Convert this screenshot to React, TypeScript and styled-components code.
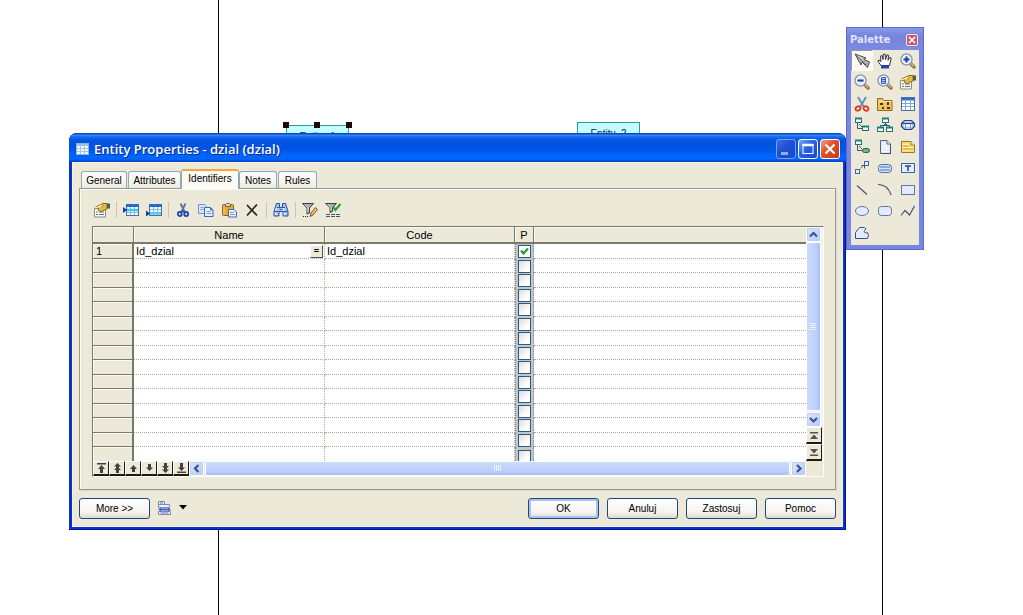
import React from "react";
import styled, { createGlobalStyle, css } from "styled-components";

const face = "#ece9d8";
const line = "#7b796c";
const uiFont = `"Liberation Sans", Arial, sans-serif`;

const GlobalStyle = createGlobalStyle`
  *, *::before, *::after { box-sizing: border-box; }
  body { margin: 0; background: #fff; color: #000; font: 10px/14px ${uiFont}; }
  button { font: inherit; color: inherit; margin: 0; padding: 0; border: 0; background: none; }
  svg { display: block; }
`;

/* ---------- diagram canvas ---------- */

const Canvas = styled.main`
  position: relative;
  min-height: 100vh;
  overflow: hidden;
`;

const PageLine = styled.div<{ $x: number }>`
  position: absolute;
  top: 0;
  bottom: 0;
  left: ${(p) => p.$x}px;
  width: 1px;
  background: #000;
`;

const Entity = styled.div<{ $x: number; $y: number }>`
  position: absolute;
  left: ${(p) => p.$x}px;
  top: ${(p) => p.$y}px;
  width: 63px;
  height: 40px;
  padding-top: 5px;
  border: 1px solid #2a9c9c;
  background: #c4fdff;
  text-align: center;
  font: 10px/12px ${uiFont};
  color: #102050;
`;

const Handle = styled.span<{ $x: number }>`
  position: absolute;
  top: -4px;
  left: ${(p) => p.$x}px;
  width: 6px;
  height: 6px;
  background: #1a0808;
`;

/* ---------- dialog window ---------- */

const Dialog = styled.section`
  position: absolute;
  left: 69px;
  right: 177px;
  top: 133px;
  padding: 0 3px 3px;
  border-radius: 8px 8px 0 0;
  background: #0a34cc;
  box-shadow: inset -1px -1px 0 #00138c, inset 1px 0 0 #0a2fb4;
`;

const TitleBar = styled.header`
  display: flex;
  align-items: center;
  gap: 5px;
  height: 29px;
  margin: 0 -3px;
  padding: 3px 6px 0 7px;
  border-radius: 8px 8px 0 0;
  background: linear-gradient(#0a48c4 0, #0a48c4 1px, #3a8cf4 2px, #1468ee 4px, #0052e0 8px, #0054e4 16px, #0064fc 22px, #0066ff 26px, #0040bc 29px);
`;

const Title = styled.h1`
  flex: 1;
  margin: 0;
  font: 600 13px/16px "Open Sans", "Noto Sans", sans-serif;
  color: #fff;
  text-shadow: 1px 1px 0 #0a2c8c;
`;

const Captions = styled.div`
  display: flex;
  gap: 2px;
`;

const CaptionButton = styled.button<{ $kind: "min" | "max" | "close" }>`
  width: 20px;
  height: 20px;
  border: 1px solid ${(p) => (p.$kind === "min" ? "#7d9eea" : "#fff")};
  border-radius: 3px;
  background: ${(p) =>
    p.$kind === "close"
      ? "linear-gradient(135deg, #f0a58c, #e0532c 40%, #c43a14)"
      : p.$kind === "max"
        ? "linear-gradient(135deg, #7aa4f4, #2a62e4 45%, #1448cc)"
        : "linear-gradient(135deg, #3f6fe0, #1f4fd2 45%, #1a48cc)"};
`;

const Body = styled.div`
  padding: 7px 7px 8px;
  background: ${face};
  box-shadow: inset 0 0 0 1px #f6f3e4;
`;

const TabList = styled.div`
  display: flex;
  align-items: flex-end;
  position: relative;
  height: 20px;
  margin-bottom: -1px;
  padding-left: 2px;
`;

const Tab = styled.button<{ $active?: boolean; $w: number }>`
  width: ${(p) => p.$w}px;
  height: 18px;
  margin-right: 1px;
  padding-top: 1px;
  border: 1px solid #91a7b4;
  border-bottom-color: #919b9c;
  border-radius: 3px 3px 0 0;
  background: linear-gradient(#fff, #f6f5ee 60%, #eceade);
  ${(p) =>
    p.$active &&
    css`
      height: 20px;
      margin: 0 0 0 -1px;
      padding: 0 0 2px;
      border-top: 2px solid #f0a83c;
      border-bottom: 0;
      background: #fbfaf5;
    `}
`;

const Panel = styled.div`
  padding: 11px 11px 12px 12px;
  border: 1px solid #919b9c;
  box-shadow: inset 1px 1px 0 #fbfaf3, 1px 1px 0 #dcd8c6;
`;

const Toolbar = styled.div`
  display: flex;
  align-items: center;
  height: 20px;
  margin: 0 0 6px -2px;
`;

const ToolButton = styled.button`
  display: grid;
  place-items: center;
  width: 23px;
  height: 20px;
`;

const Separator = styled.span`
  width: 1px;
  height: 16px;
  margin: 0 2px 0 3px;
  background: #c9c5b2;
`;

/* ---------- identifier grid ---------- */

const GridFrame = styled.div`
  border: 1px solid;
  border-color: ${line} #fff #fff ${line};
`;

const GridTop = styled.div`
  display: flex;
`;

const Table = styled.table`
  flex: 1;
  table-layout: fixed;
  width: 100%;
  border-spacing: 0;
  background: #fff;
  font-size: 11px;
  line-height: 13px;
`;

const HeadCell = styled.th`
  height: 17px;
  padding: 2px 0 0;
  border-right: 1px solid ${line};
  border-bottom: 2px solid ${line};
  background: ${face};
  box-shadow: inset 1px 1px 0 #fbfaf3;
  font-weight: 400;
  line-height: 13px;
  &:last-child { border-right: 0; }
`;

const Row = styled.tr`
  height: 15px;
  &:nth-child(even) { height: 14px; }
  &:last-child { height: 14px; }
`;

const RowHead = styled.th`
  padding: 0 3px;
  border-right: 2px solid ${line};
  border-bottom: 1px solid ${line};
  background: ${face};
  box-shadow: inset 1px 1px 0 #fbfaf3;
  font-weight: 400;
  text-align: left;
  ${Row}:last-child & { border-bottom: 0; }
`;

const Cell = styled.td`
  padding: 0 1px 0 2px;
  border-right: 1px dotted #b0aca4;
  border-bottom: 1px dotted #aaa8a0;
  &:last-child { border-right: 0; }
  ${Row}:last-child & { border-bottom: 0; }
`;

const FlagCell = styled.td`
  padding: 0;
  background: #c3c6cb;
  border-right: 1px dotted #8c8c8c;
  border-left: 1px dotted #8c8c8c;
  vertical-align: top;
`;

const NameContent = styled.div`
  display: flex;
  justify-content: space-between;
  height: 13px;
`;

const EditButton = styled.button`
  width: 13px;
  height: 13px;
  border: 1px solid;
  border-color: #fff #55534a #55534a #fff;
  background: ${face};
  font: 700 9px/10px ${uiFont};
`;

const Check = styled.input<{ $cut?: boolean }>`
  appearance: none;
  display: block;
  width: 13px;
  height: 13px;
  margin: 1px auto 0;
  border: 1px solid #2c5a80;
  background: linear-gradient(135deg, #dcdcd7, #fff 70%);
  &:checked { background: #fff; }
  ${(p) =>
    p.$cut &&
    css`
      height: 11px;
      margin-top: 3px;
      border-bottom: 0;
    `}
`;

const CheckWrap = styled.label`
  display: grid;
  height: 14px;
  overflow: hidden;
  & > * { grid-area: 1 / 1; }
  & > svg { margin: 1px auto 0; pointer-events: none; z-index: 1; }
`;

const VBar = styled.div`
  display: flex;
  flex-direction: column;
  width: 17px;
  background: #f4f3ea;
`;

const ScrollArrow = styled.button`
  display: grid;
  place-items: center;
  width: 15px;
  height: 15px;
  border: 1px solid #fff;
  border-radius: 2px;
  background: linear-gradient(135deg, #dbe6ff, #b6cafa);
  box-shadow: inset 0 0 0 1px #bccdf8;
`;

const VThumb = styled.div`
  display: grid;
  place-items: center;
  flex: 1;
  width: 15px;
  margin-bottom: 1px;
  border: 1px solid #fff;
  border-radius: 2px;
  background: linear-gradient(90deg, #cddbfd, #bccffb 70%, #a8bff2);
`;

const HThumb = styled.div`
  display: grid;
  place-items: center;
  flex: 1;
  height: 15px;
  margin: 0 1px;
  border: 1px solid #fff;
  border-radius: 2px;
  background: linear-gradient(#cddbfd, #bccffb 70%, #a8bff2);
`;

const NavButton = styled.button<{ $tall?: boolean }>`
  display: grid;
  place-items: center;
  width: 16px;
  height: ${(p) => (p.$tall ? 17 : 15)}px;
  border: solid;
  border-width: 1px 1px 2px;
  border-color: #fff #1c1b16 #1c1b16 #fff;
  background: ${face};
`;

const HBar = styled.div`
  display: flex;
  padding-right: 17px;
  background: ${face};
`;

/* ---------- dialog footer ---------- */

const Footer = styled.footer`
  display: flex;
  align-items: center;
  gap: 8px;
  margin-top: 8px;
`;

const PushButton = styled.button<{ $default?: boolean }>`
  width: 71px;
  height: 21px;
  border: 1px solid #1f4a78;
  border-radius: 3px;
  background: linear-gradient(#fff, #f4f3ee 70%, #dedacd);
  ${(p) => p.$default && css`box-shadow: inset 0 0 0 2px #a9c3f0;`}
`;

const ReportButton = styled.button`
  display: flex;
  align-items: center;
  gap: 6px;
  margin: 0 auto 2px -1px;
`;

/* ---------- palette window ---------- */

const Palette = styled.aside`
  position: absolute;
  top: 27px;
  right: 99px;
  padding: 0 4px 4px;
  border: 1px solid #5c68cc;
  background: #7886e0;
`;

const PaletteTitle = styled.header`
  display: flex;
  align-items: center;
  justify-content: space-between;
  height: 22px;
  margin: 0 -4px;
  padding: 2px 5px 0 3px;
  background: linear-gradient(#8a98ea, #7483dc 40%, #7c8ae4);
  font: 700 10px/14px "DejaVu Sans", sans-serif;
  color: #dfe5fb;
`;

const PaletteClose = styled.button`
  display: grid;
  place-items: center;
  width: 12px;
  height: 12px;
  border: 1px solid #f4e6ee;
  border-radius: 2px;
  background: #c45a6c;
`;

const PaletteGrid = styled.div`
  display: grid;
  grid-template-columns: 22px 23px 23px;
  grid-template-rows: repeat(4, 21px 22px) 21px;
  padding-bottom: 2px;
  background: ${face};
`;

const PaletteTool = styled.button<{ $active?: boolean }>`
  display: grid;
  place-items: center;
  ${(p) =>
    p.$active &&
    css`
      border: 1px solid;
      border-color: #9c9a8c #fff #fff #9c9a8c;
      background: #faf9f5;
    `}
`;

/* ---------- icons ---------- */

const Icon = ({ children, w = 16, h = 16 }: { children: React.ReactNode; w?: number; h?: number }) => (
  <svg width={w} height={h} viewBox={`0 0 ${w} ${h}`} fill="none" aria-hidden="true">
    {children}
  </svg>
);

const gridIcon = (x: number) => (
  <>
    <rect x={x + 0.5} y="2.5" width={15 - x} height="11" fill="#f0fbff" stroke="#4470a8" />
    <path d={`M${x} 3.500h${16 - x}`} stroke="#2c68c8" strokeWidth="3" />
    <path d={`M${x + 1} 7.5h${14 - x}M${x + 1} 10.5h${14 - x}M${x + 4.5} 5v8M${x + 8.5} 5v8`} stroke="#8cb8d8" />
  </>
);

const properties = (
  <>
    <path d="M.5 6.5h11v8.500H.5z" fill="#fbfbf8" stroke="#8a8a80" />
    <path d="M2 10h2M5 10h5M2 12.500h2M5 12.500h5" stroke="#5c6c88" />
    <path d="M5 4l4-2.500h4V7l-3 1-2 1.500-3-.5-1-2z" fill="#e4bc48" stroke="#86681c" />
    <path d="M1.500 5l6-3 2 1.500-3 2.500" fill="#f8e49c" stroke="#a08428" />
    <path d="M13 1.500h3v5h-3z" fill="#4c6444" />
  </>
);

const lens = (inner: React.ReactNode) => (
  <>
    <path d="M10 10l4 4" stroke="#8c744c" strokeWidth="3.400" strokeLinecap="round" />
    <path d="M10.500 10l3.500 3.500" stroke="#d8bc80" strokeWidth="1.200" />
    <circle cx="6.500" cy="6.500" r="5.500" fill="#dfeafc" stroke="#909cb0" strokeWidth="1.500" />
    <circle cx="6.500" cy="6.500" r="4.200" stroke="#f8fbff" />
    {inner}
  </>
);

const nodeBox = (x: number, y: number) => (
  <>
    <rect x={x + 0.5} y={y + 0.5} width="6" height="4" fill="#f0fdfc" stroke="#34686c" />
    <path d={`M${x} ${y + 0.5}h7`} stroke="#148484" strokeWidth="2" />
  </>
);

const icons = {
  properties,
  insertRow: (
    <>
      {gridIcon(3)}
      <path d="M4 8h11" stroke="#3cc8e4" strokeWidth="2.400" />
      <path d="M0 5l4 3-4 3z" fill="#183c9c" />
    </>
  ),
  addRow: (
    <>
      {gridIcon(3)}
      <path d="M4 11.500h11" stroke="#58cce4" strokeWidth="2.400" />
      <path d="M0 8.500l4 3-4 3z" fill="#183c9c" />
    </>
  ),
  cut: (
    <>
      <path d="M5.500 1.500l4.500 9M10.500 1.500L6 10.500" stroke="#5c7498" strokeWidth="1.800" />
      <circle cx="4.800" cy="12" r="2" stroke="#2048b0" strokeWidth="1.800" />
      <circle cx="11.200" cy="12" r="2" stroke="#2048b0" strokeWidth="1.800" />
      <path d="M6.500 9.500h3" stroke="#2048b0" strokeWidth="1.600" />
    </>
  ),
  copy: (
    <>
      <path d="M.5 2.500h6l2 2v7h-8z" fill="#d8e6ff" stroke="#7890c8" />
      <path d="M6.500 5.500h6l2.500 2.500v6.500H6.500z" fill="#e8f1ff" stroke="#4464b4" />
      <path d="M12.500 5.500V8h2.500" stroke="#4464b4" />
      <path d="M8.500 9.500h4M8.500 11.500h5M2.500 5.500h3M2.500 7.500h3" stroke="#7c9ce0" />
    </>
  ),
  paste: (
    <>
      <rect x="1.500" y="2.500" width="11" height="11" rx="1" fill="#e8a82c" stroke="#8c6420" />
      <path d="M3 4v9" stroke="#f8d478" />
      <path d="M4.500 4.500v-2l1-1h3l1 1v2z" fill="#dcd8c4" stroke="#6c6850" />
      <path d="M7.500 7.500h5.500l2.500 2.500v5H7.500z" fill="#e8f1ff" stroke="#4a6ab0" />
      <path d="M9 10.500h4M9 12.500h5" stroke="#7c9ce0" />
    </>
  ),
  remove: <path d="M3 3l10 10.500M13 2.500L3 13.500" stroke="#26261f" strokeWidth="1.700" />,
  find: (
    <>
      <path d="M3.500 1.500h3v4h3v-4h3l2.500 8v4.500h-5v-4.500h-4v4.500h-5v-4.500z" fill="#a8c4f4" stroke="#28509c" />
      <path d="M4 5.500h2.500M9.500 5.500H12M6.500 7.500h3M1.500 9.500h4M10.500 9.500h4" stroke="#28509c" />
      <path d="M3.500 6.500l-1 2M11 6.500l-1 2M2.500 11v2M11.500 11v2" stroke="#f0f6ff" strokeWidth="1.400" />
    </>
  ),
  filterEdit: (
    <>
      <path d="M.5 1.500h11l-4 4.500v5l-2.500 1V6z" fill="#a4aaa8" stroke="#3c4044" />
      <path d="M3 2.500l3 3.500v4" stroke="#e4e8e8" />
      <path d="M8 14.500l1-3.500 4.500-5.500 2 2L11 13z" fill="#f4bc6c" stroke="#7c5028" />
      <path d="M1 14.500h1M3 14.500h1M5 14.500h1" stroke="#222" />
    </>
  ),
  filterOn: (
    <>
      <path d="M.5 1.500h11l-4 4v4l-2.500 1V5.500z" fill="#a4aaa8" stroke="#3c4044" />
      <path d="M3 2.500l3 3v3" stroke="#e4e8e8" />
      <path d="M8 4.500L10.500 8 15.500 2" stroke="#2c9c34" strokeWidth="2.200" />
      <path d="M1 12.500h4M6 12.500h4M11 12.500h4M1 14.500h4M6 14.500h4M11 14.500h4" stroke="#4c5464" />
    </>
  ),
  pointer: (
    <>
      <path d="M1 1l6 11 1-3 5.500 5.500 2-5.500L10 6.500l2-1.500z" fill="#b0b0b0" stroke="#505050" />
      <path d="M2.500 2.500L12 12" stroke="#6c6c6c" />
      <path d="M4 3l5 3" stroke="#e4e4e4" />
    </>
  ),
  hand: (
    <>
      <path d="M4 12.500L.8 8l1.200-1 2 1.500L3.500 3.200 5 2.500l1 4 .2-5L8 1l.5 5.500L10 1.800l1.500.5-.5 5 1.800-3 1.400.7-1.700 7.500z" fill="#fff" stroke="#2c3038" />
      <path d="M4 14h8" stroke="#1c48c0" strokeWidth="3" />
    </>
  ),
  zoomIn: lens(<path d="M3.500 6.500h6M6.500 3.500v6" stroke="#1c3c9c" strokeWidth="2" />),
  zoomOut: lens(<path d="M3.500 6.500h6" stroke="#1c3c9c" strokeWidth="2" />),
  zoomPage: lens(<path d="M4.500 3.500h4v6h-4zM5 5.500h3M5 7.500h3" fill="#a8c4f8" stroke="#3c60c0" />),
  cutRed: (
    <>
      <path d="M4 1l5.500 9.500M12 1L6.500 10.500" stroke="#5c90b4" strokeWidth="1.800" />
      <ellipse cx="4" cy="12.500" rx="2.500" ry="2" stroke="#e03820" strokeWidth="1.800" transform="rotate(-25 4 12.500)" />
      <ellipse cx="12" cy="12.500" rx="2.500" ry="2" stroke="#e03820" strokeWidth="1.800" transform="rotate(25 12 12.500)" />
    </>
  ),
  folder: (
    <>
      <path d="M.5 2.500h5l1.500 2h8v10H.5z" fill="#f0c458" stroke="#8c6820" />
      <path d="M1.500 5.500h13" stroke="#fce8a8" />
      <path d="M3 7h3v2H3zM10 6h2v3h-2zM5 11h2v2H5zM10 11h3v2h-3z" fill="#503818" />
    </>
  ),
  table: (
    <>
      <rect x="1.500" y="1.500" width="13" height="13" fill="#f8fdff" stroke="#4870a8" />
      <path d="M1 3h14" stroke="#3470c4" strokeWidth="3" />
      <path d="M2 7.500h12M2 10.500h12M5.500 5v9M10.500 5v9" stroke="#84a8cc" />
    </>
  ),
  link: (
    <>
      {nodeBox(1, 1)}
      {nodeBox(8, 9)}
      <path d="M3.500 6v5.500h4.500M5 7l3 3" stroke="#405468" />
    </>
  ),
  inherit: (
    <>
      {nodeBox(5, 1)}
      {nodeBox(0, 10)}
      {nodeBox(9, 10)}
      <path d="M8.500 6v2M3.500 10V8.500h9V10M6.500 8.500l2-2 2 2" stroke="#405468" />
    </>
  ),
  association: (
    <>
      <path d="M4.500 3.500h7l3 3v3l-3 3h-7l-3-3v-3z" fill="#b4ccf4" stroke="#244484" strokeWidth="1.200" />
      <path d="M2 6.500h12" stroke="#244484" />
      <path d="M4 8.500h8" stroke="#f4f9ff" strokeWidth="2.400" />
      <path d="M5.500 7v5M10.500 7v5" stroke="#7c9cd4" />
    </>
  ),
  assocLink: (
    <>
      {nodeBox(1, 1)}
      <path d="M3.500 6v5.500h4.500M5 7l3 3" stroke="#405468" />
      <rect x="8.500" y="9.500" width="7" height="4" rx="2" fill="#68b884" stroke="#246040" />
    </>
  ),
  file: (
    <>
      <path d="M3.500 1.500h6.500l3.500 3.500v9.500h-10z" fill="#e4e8f0" stroke="#5c6478" />
      <path d="M10 1.500V5h3.500" fill="#fff" stroke="#5c6478" />
      <path d="M5 4.500h3M5 7h7M5 9.500h7M5 12h7" stroke="#fff" />
      <path d="M13.500 5v10M4 14.500h10" stroke="#48506c" />
    </>
  ),
  note: (
    <>
      <path d="M1.500 2.500h9.500l3.500 3.500v7.500h-13z" fill="#fcdc64" stroke="#907838" />
      <path d="M11 2.500V6h3.500" fill="#fff" stroke="#907838" />
      <path d="M3 5.500h6M3 8.500h10M3 11h10" stroke="#fff6cc" />
      <path d="M3 7h6M3 10h10" stroke="#d8942c" />
    </>
  ),
  trace: (
    <>
      <path d="M5 10l5-5" stroke="#405068" strokeDasharray="2 1" />
      <rect x="1.500" y="9.500" width="4" height="4" fill="#e4ecff" stroke="#4464a8" />
      <rect x="10.500" y="1.500" width="4" height="4" fill="#e4ecff" stroke="#4464a8" />
      <path d="M7.500 5.500h3v3" stroke="#405068" />
    </>
  ),
  title: (
    <>
      <rect x="1.500" y="4.500" width="13" height="8" rx="3" fill="#d4e2fc" stroke="#4c6cb0" />
      <path d="M3 7h10M3 10h10" stroke="#5070b8" />
    </>
  ),
  text: (
    <>
      <rect x="1.500" y="3.500" width="13" height="9" fill="#e4eeff" stroke="#3860a8" />
      <path d="M5 6h6M8 6v5" stroke="#284c98" strokeWidth="1.600" />
    </>
  ),
  line: <path d="M3 3.500l10 9" stroke="#48506c" strokeWidth="1.200" />,
  arc: <path d="M1 2.500c7 0 11 4 13 10.500" stroke="#48506c" strokeWidth="1.200" />,
  rect: <rect x="1.500" y="3.500" width="13" height="9" fill="#e2ecfe" stroke="#5c74ac" />,
  ellipse: <ellipse cx="8" cy="8" rx="6.500" ry="4.500" fill="#e2ecfe" stroke="#5c74ac" />,
  rounded: <rect x="1.500" y="3.500" width="13" height="9" rx="3" fill="#e2ecfe" stroke="#5c74ac" />,
  polyline: <path d="M1 12.500l4-5 4.500 4.500L14.500 3" stroke="#48506c" strokeWidth="1.200" />,
  polygon: <path d="M1.500 13.500V7.500l4-5h5l1.500 1.500c-3 2-2 5 1.500 3.500l1 3-1 3z" fill="#e2ecfe" stroke="#384c88" />,
};

type IconName = keyof typeof icons;

const paletteTools: [IconName, string][] = [
  ["pointer", "Pointer"], ["hand", "Grabber"], ["zoomIn", "Zoom in"],
  ["zoomOut", "Zoom out"], ["zoomPage", "Open diagram"], ["properties", "Properties"],
  ["cutRed", "Delete"], ["folder", "Package"], ["table", "Entity"],
  ["link", "Relationship"], ["inherit", "Inheritance"], ["association", "Association"],
  ["assocLink", "Association link"], ["file", "File"], ["note", "Note"],
  ["trace", "Link"], ["title", "Title"], ["text", "Text"],
  ["line", "Line"], ["arc", "Arc"], ["rect", "Rectangle"],
  ["ellipse", "Ellipse"], ["rounded", "Rounded rectangle"], ["polyline", "Polyline"],
  ["polygon", "Polygon"],
];

const toolbarGroups: [IconName, string][][] = [
  [["properties", "Properties"]],
  [["insertRow", "Insert a row"], ["addRow", "Add a row"]],
  [["cut", "Cut"], ["copy", "Copy"], ["paste", "Paste"], ["remove", "Delete"]],
  [["find", "Find a row"]],
  [["filterEdit", "Customize columns and filter"], ["filterOn", "Enable filter"]],
];

const navButtons: [string, string][] = [
  ["Move to top", "M1 0h9v1.500H1zM5.500 2l3.500 4H7v4H4V6H2z"],
  ["Move up a page", "M5.500 0L9 3.500H7V5l2 2H7v3H4V7H2l2-2V3.500H2z"],
  ["Move up", "M5.500 2l3.500 4H7v3H4V6H2z"],
  ["Move down", "M5.500 8L2 4.500h2V1h3v3.500h2z"],
  ["Move down a page", "M5.500 10L9 6.500H7V5l2-2H7V0H4v3H2l2 2v1.500H2z"],
  ["Move to bottom", "M1 8.500h9V10H1zM5.500 8L2 4.500h2V0h3v4.500h2z"],
];

const tabs: [string, number][] = [
  ["General", 46],
  ["Attributes", 53],
  ["Identifiers", 58],
  ["Notes", 38],
  ["Rules", 39],
];

const Chevron = ({ d }: { d: string }) => (
  <Icon w={9} h={9}>
    <path d={d} stroke="#3d5488" strokeWidth="2.200" />
  </Icon>
);

const PaletteWindow = () => (
  <Palette aria-label="Palette">
    <PaletteTitle>
      Palette
      <PaletteClose aria-label="Close palette">
        <Icon w={8} h={8}><path d="M1 1l6 6M7 1L1 7" stroke="#fff" strokeWidth="1.600" /></Icon>
      </PaletteClose>
    </PaletteTitle>
    <PaletteGrid>
      {paletteTools.map(([name, label], i) => (
        <PaletteTool key={label} aria-label={label} $active={i === 0}>
          <Icon>{icons[name]}</Icon>
        </PaletteTool>
      ))}
    </PaletteGrid>
  </Palette>
);

const IdentifierGrid = () => (
  <GridFrame>
    <GridTop>
      <Table>
        <colgroup>
          <col width={41} />
          <col width={191} />
          <col width={190} />
          <col width={19} />
          <col />
        </colgroup>
        <thead>
          <tr>
            <HeadCell aria-label="Row" />
            <HeadCell>Name</HeadCell>
            <HeadCell>Code</HeadCell>
            <HeadCell>P</HeadCell>
            <HeadCell aria-hidden="true" />
          </tr>
        </thead>
        <tbody>
          {Array.from({ length: 15 }, (_, i) => (
            <Row key={i}>
              <RowHead>{i === 0 ? "1" : ""}</RowHead>
              <Cell>
                {i === 0 && (
                  <NameContent>
                    Id_dzial
                    <EditButton aria-label="Name equals code">=</EditButton>
                  </NameContent>
                )}
              </Cell>
              <Cell>{i === 0 ? "Id_dzial" : ""}</Cell>
              <FlagCell>
                <CheckWrap>
                  <Check type="checkbox" defaultChecked={i === 0} $cut={i === 14} aria-label={`Primary, row ${i + 1}`} />
                  {i === 0 && (
                    <Icon w={13} h={13}>
                      <path d="M3 5.500l2.500 3L10 3.500" stroke="#21a121" strokeWidth="2.200" />
                    </Icon>
                  )}
                </CheckWrap>
              </FlagCell>
              <Cell />
            </Row>
          ))}
        </tbody>
      </Table>
      <VBar>
        <ScrollArrow aria-label="Scroll up"><Chevron d="M1 6.500L4.500 3 8 6.500" /></ScrollArrow>
        <VThumb>
          <Icon w={7} h={8}><path d="M0 .5h6M0 2.500h6M0 4.500h6M0 6.500h6" stroke="#eef4fe" /></Icon>
        </VThumb>
        <ScrollArrow aria-label="Scroll down"><Chevron d="M1 3l3.500 3.500L8 3" /></ScrollArrow>
        <NavButton $tall aria-label="First row">
          <Icon w={10} h={9}><path d="M1 1h8v1.500H1zM5 3.500L9 8H1z" fill="#55534a" /></Icon>
        </NavButton>
        <NavButton $tall aria-label="Last row">
          <Icon w={10} h={9}><path d="M1 6.500h8V8H1zM5 5.500L1 1h8z" fill="#55534a" /></Icon>
        </NavButton>
      </VBar>
    </GridTop>
    <HBar>
      {navButtons.map(([label, d]) => (
        <NavButton key={label} aria-label={label}>
          <Icon w={11} h={10}><path d={d} fill="#45443c" /></Icon>
        </NavButton>
      ))}
      <ScrollArrow aria-label="Scroll left"><Chevron d="M6.500 1L3 4.500 6.500 8" /></ScrollArrow>
      <HThumb>
        <Icon w={8} h={7}><path d="M.5 0v6M2.500 0v6M4.500 0v6M6.500 0v6" stroke="#eef4fe" /></Icon>
      </HThumb>
      <ScrollArrow aria-label="Scroll right"><Chevron d="M3 1l3.500 3.500L3 8" /></ScrollArrow>
    </HBar>
  </GridFrame>
);

export default function App() {
  return (
    <Canvas>
      <GlobalStyle />
      <PageLine $x={218} />
      <PageLine $x={882} />
      <Entity $x={286} $y={125}>
        Entity_1
        <Handle $x={-4} />
        <Handle $x={27} />
        <Handle $x={59} />
      </Entity>
      <Entity $x={577} $y={122}>Entity_2</Entity>
      <PaletteWindow />
      <Dialog role="dialog" aria-labelledby="dialog-title">
        <TitleBar>
          <Icon w={13} h={13}>
            <rect x=".5" y=".5" width="12" height="11" fill="#f4faff" stroke="#8cb4e4" />
            <path d="M1 2h11" stroke="#9cc4ec" strokeWidth="2" />
            <path d="M1 5.500h11M1 8.500h11M4.500 3v8M8.500 3v8" stroke="#a8c4e4" />
          </Icon>
          <Title id="dialog-title">Entity Properties - dzial (dzial)</Title>
          <Captions>
            <CaptionButton $kind="min" aria-label="Minimize">
              <Icon w={18} h={18}><path d="M4 13.500h7" stroke="#8fb0f0" strokeWidth="3" /></Icon>
            </CaptionButton>
            <CaptionButton $kind="max" aria-label="Maximize">
              <Icon w={18} h={18}>
                <rect x="4" y="4.500" width="10" height="9" stroke="#fff" />
                <path d="M3.500 5h11" stroke="#fff" strokeWidth="2.500" />
              </Icon>
            </CaptionButton>
            <CaptionButton $kind="close" aria-label="Close">
              <Icon w={18} h={18}><path d="M4.500 4.500l9 9M13.500 4.500l-9 9" stroke="#fff" strokeWidth="2.200" /></Icon>
            </CaptionButton>
          </Captions>
        </TitleBar>
        <Body>
          <TabList role="tablist">
            {tabs.map(([label, w]) => (
              <Tab key={label} role="tab" $w={w} $active={label === "Identifiers"} aria-selected={label === "Identifiers"}>
                {label}
              </Tab>
            ))}
          </TabList>
          <Panel role="tabpanel">
            <Toolbar role="toolbar">
              {toolbarGroups.map((group, g) => (
                <React.Fragment key={g}>
                  {g > 0 && <Separator />}
                  {group.map(([name, label]) => (
                    <ToolButton key={label} aria-label={label}>
                      <Icon>{icons[name]}</Icon>
                    </ToolButton>
                  ))}
                </React.Fragment>
              ))}
            </Toolbar>
            <IdentifierGrid />
          </Panel>
          <Footer>
            <PushButton>More &gt;&gt;</PushButton>
            <ReportButton aria-label="Property sheet menu">
              <Icon>
                <path d="M1.500 1.500h6v3h-6zM1.500 4.500h11v3h-11zM1.500 11.500h12v3h-12z" fill="#eef2fc" stroke="#7c8ab0" />
                <path d="M3 9.500h9" stroke="#3c60d0" strokeWidth="2" />
                <path d="M1 9.500l3-2v4zM14 9.500l-3-2v4z" fill="#3c60d0" />
                <path d="M3.500 13h8M3 3h3" stroke="#5874c8" />
              </Icon>
              <Icon w={8} h={5}><path d="M0 0h8L4 4.500z" fill="#000" /></Icon>
            </ReportButton>
            <PushButton $default>OK</PushButton>
            <PushButton>Anuluj</PushButton>
            <PushButton>Zastosuj</PushButton>
            <PushButton>Pomoc</PushButton>
          </Footer>
        </Body>
      </Dialog>
    </Canvas>
  );
}
